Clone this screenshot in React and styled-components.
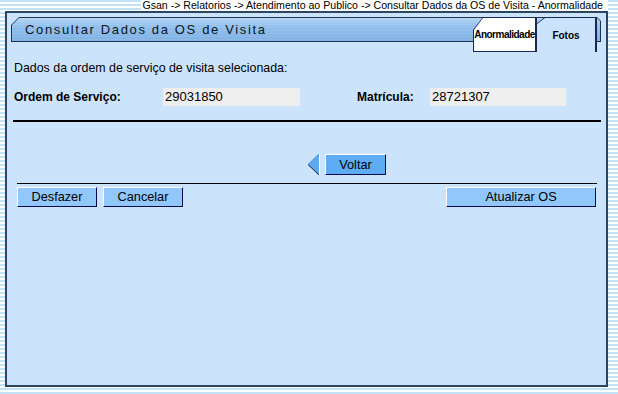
import React from 'react';
import styled, { createGlobalStyle } from 'styled-components';

const GlobalStyle = createGlobalStyle`
  html, body {
    margin: 0;
    padding: 0;
  }

  body {
    font-family: "Liberation Sans", Arial, sans-serif;
    background: repeating-linear-gradient(
      to bottom,
      #c2e2f5 0px,
      #c2e2f5 2px,
      #ffffff 2px,
      #ffffff 4px
    );
  }
`;

const Page = styled.div`
  width: 618px;
  height: 394px;
  overflow: hidden;
`;

const Breadcrumb = styled.div`
  display: flex;
  justify-content: flex-end;
  padding-right: 10px;
  height: 11px;
`;

const Crumbs = styled.span`
  background: #ffffff;
  color: #000000;
  font-size: 10.6px;
  line-height: 11px;
  padding: 0 5px 0 1px;
  white-space: nowrap;
`;

const Panel = styled.div`
  box-sizing: border-box;
  margin-left: 5px;
  width: 603px;
  height: 376px;
  border: 2px solid #2c4560;
  background: #cbe4fc;
`;

const Header = styled.div`
  position: relative;
  margin: 4px 0 0 4px;
  width: 590px;
  height: 35px;
`;

const TitleFrame = styled.div`
  height: 25px;
  padding: 1px;
  box-sizing: border-box;
  background: #1d3350;
  clip-path: polygon(8px 0, calc(100% - 4px) 0, 100% 4px, 100% 100%, 0 100%, 0 8px);
`;

const TitleFill = styled.div`
  height: 100%;
  display: flex;
  align-items: center;
  padding-left: 13px;
  box-sizing: border-box;
  background:
    repeating-linear-gradient(to bottom, rgba(255, 255, 255, 0.08) 0, rgba(255, 255, 255, 0.08) 1px, transparent 1px, transparent 3px),
    linear-gradient(to bottom, #b3d5f4 0%, #93c0ec 35%, #7fb1e3 100%);
  clip-path: polygon(7px 0, calc(100% - 3px) 0, 100% 3px, 100% 100%, 0 100%, 0 7px);
  color: #0b1626;
  font-size: 13px;
  letter-spacing: 1.65px;
`;

const TabFrame = styled.div`
  position: absolute;
  top: 0;
  left: ${(p) => p.$left}px;
  width: ${(p) => p.$width}px;
  height: 35px;
  box-sizing: border-box;
  padding: 1px 2px ${(p) => (p.$open ? 0 : 1)}px 1px;
  background: #1a2656;
  clip-path: polygon(${(p) => p.$cx}px 0, 100% 0, 100% 100%, 0 100%, 0 ${(p) => p.$cy}px);
`;

const TabFill = styled.div`
  height: 100%;
  display: flex;
  align-items: center;
  justify-content: center;
  background: ${(p) => p.$bg};
  clip-path: polygon(${(p) => p.$cx - 1}px 0, 100% 0, 100% 100%, 0 100%, 0 ${(p) => p.$cy - 1}px);
  color: #000000;
  font-size: 10px;
  font-weight: bold;
  letter-spacing: ${(p) => (p.$tight ? '-0.5px' : '0')};
  white-space: nowrap;
`;

const Body = styled.div`
  padding: 9px 5px 0 6px;
`;

const Intro = styled.div`
  font-size: 12.4px;
  line-height: 14px;
  padding-left: 1px;
  color: #000000;
`;

const FieldRow = styled.div`
  display: flex;
  align-items: center;
  margin-top: 13px;
  padding-left: 1px;
  height: 18px;
`;

const FieldLabel = styled.div`
  width: ${(p) => p.$width}px;
  margin-left: ${(p) => p.$offset || 0}px;
  font-size: 12px;
  font-weight: bold;
  color: #000000;
`;

const ReadOnly = styled.div`
  width: ${(p) => p.$width}px;
  height: 18px;
  line-height: 18px;
  padding-left: 2px;
  box-sizing: border-box;
  background: #eeeeee;
  font-size: 13px;
  color: #000000;
`;

const Rule = styled.div`
  height: ${(p) => p.$thick}px;
  background: #000000;
  margin: ${(p) => p.$margin};
`;

const BackRow = styled.div`
  display: flex;
  align-items: center;
  margin: 32px 0 0 294px;
  height: 21px;
`;

const ActionRow = styled.div`
  display: flex;
  align-items: center;
  margin: 3px 5px 0 4px;
`;

const Button = styled.button`
  box-sizing: border-box;
  width: ${(p) => p.$width}px;
  height: ${(p) => p.$height || 20}px;
  margin: 0 ${(p) => p.$gap || 0}px 0 0;
  padding: 0;
  background: ${(p) => p.$bg || '#91c7fb'};
  border-top: 1px solid #ffffff;
  border-left: 1px solid #ffffff;
  border-right: 1px solid #0a0a4a;
  border-bottom: 1px solid #0a0a4a;
  font-family: "Liberation Sans", Arial, sans-serif;
  font-size: 12.7px;
  color: #000000;
  cursor: pointer;
`;

const Spacer = styled.div`
  flex: 1;
`;

const BackArrow = () => (
  <svg width="14" height="23" viewBox="0 0 14 23" style={{ marginRight: 4 }}>
    <polygon points="1,11.5 12,1 12,22" fill="#5ba9f2" />
    <line x1="1" y1="11.5" x2="12" y2="22" stroke="#0d1a3a" strokeWidth="1" />
    <line x1="1" y1="11.5" x2="12" y2="1" stroke="#3f8fe0" strokeWidth="1" />
    <line x1="12.5" y1="1" x2="12.5" y2="22" stroke="#ffffff" strokeWidth="1" />
  </svg>
);

export default function App() {
  return (
    <Page>
      <GlobalStyle />
      <Breadcrumb>
        <Crumbs>
          Gsan -&gt; Relatorios -&gt; Atendimento ao Publico -&gt; Consultar Dados da OS de Visita - Anormalidade
        </Crumbs>
      </Breadcrumb>
      <Panel>
        <Header>
          <TitleFrame>
            <TitleFill>Consultar Dados da OS de Visita</TitleFill>
          </TitleFrame>
          <TabFrame $left={462} $width={64} $cx={10} $cy={13}>
            <TabFill $bg="#ffffff" $cx={10} $cy={13} $tight>
              Anormalidade
            </TabFill>
          </TabFrame>
          <TabFrame $left={525} $width={61} $cx={9} $cy={7} $open>
            <TabFill $bg="#cbe4fc" $cx={9} $cy={7}>
              Fotos
            </TabFill>
          </TabFrame>
        </Header>
        <Body>
          <Intro>Dados da ordem de serviço de visita selecionada:</Intro>
          <FieldRow>
            <FieldLabel $width={149}>Ordem de Serviço:</FieldLabel>
            <ReadOnly $width={137}>29031850</ReadOnly>
            <FieldLabel $width={73} $offset={57}>Matrícula:</FieldLabel>
            <ReadOnly $width={136}>28721307</ReadOnly>
          </FieldRow>
          <Rule $thick={2} $margin="14px 0 0 0" />
          <BackRow>
            <BackArrow />
            <Button $width={61} $height={21} $bg="#5eacf4">Voltar</Button>
          </BackRow>
          <Rule $thick={1} $margin="8px 4px 0 4px" />
          <ActionRow>
            <Button $width={80} $gap={6}>Desfazer</Button>
            <Button $width={80}>Cancelar</Button>
            <Spacer />
            <Button $width={150}>Atualizar OS</Button>
          </ActionRow>
        </Body>
      </Panel>
    </Page>
  );
}
